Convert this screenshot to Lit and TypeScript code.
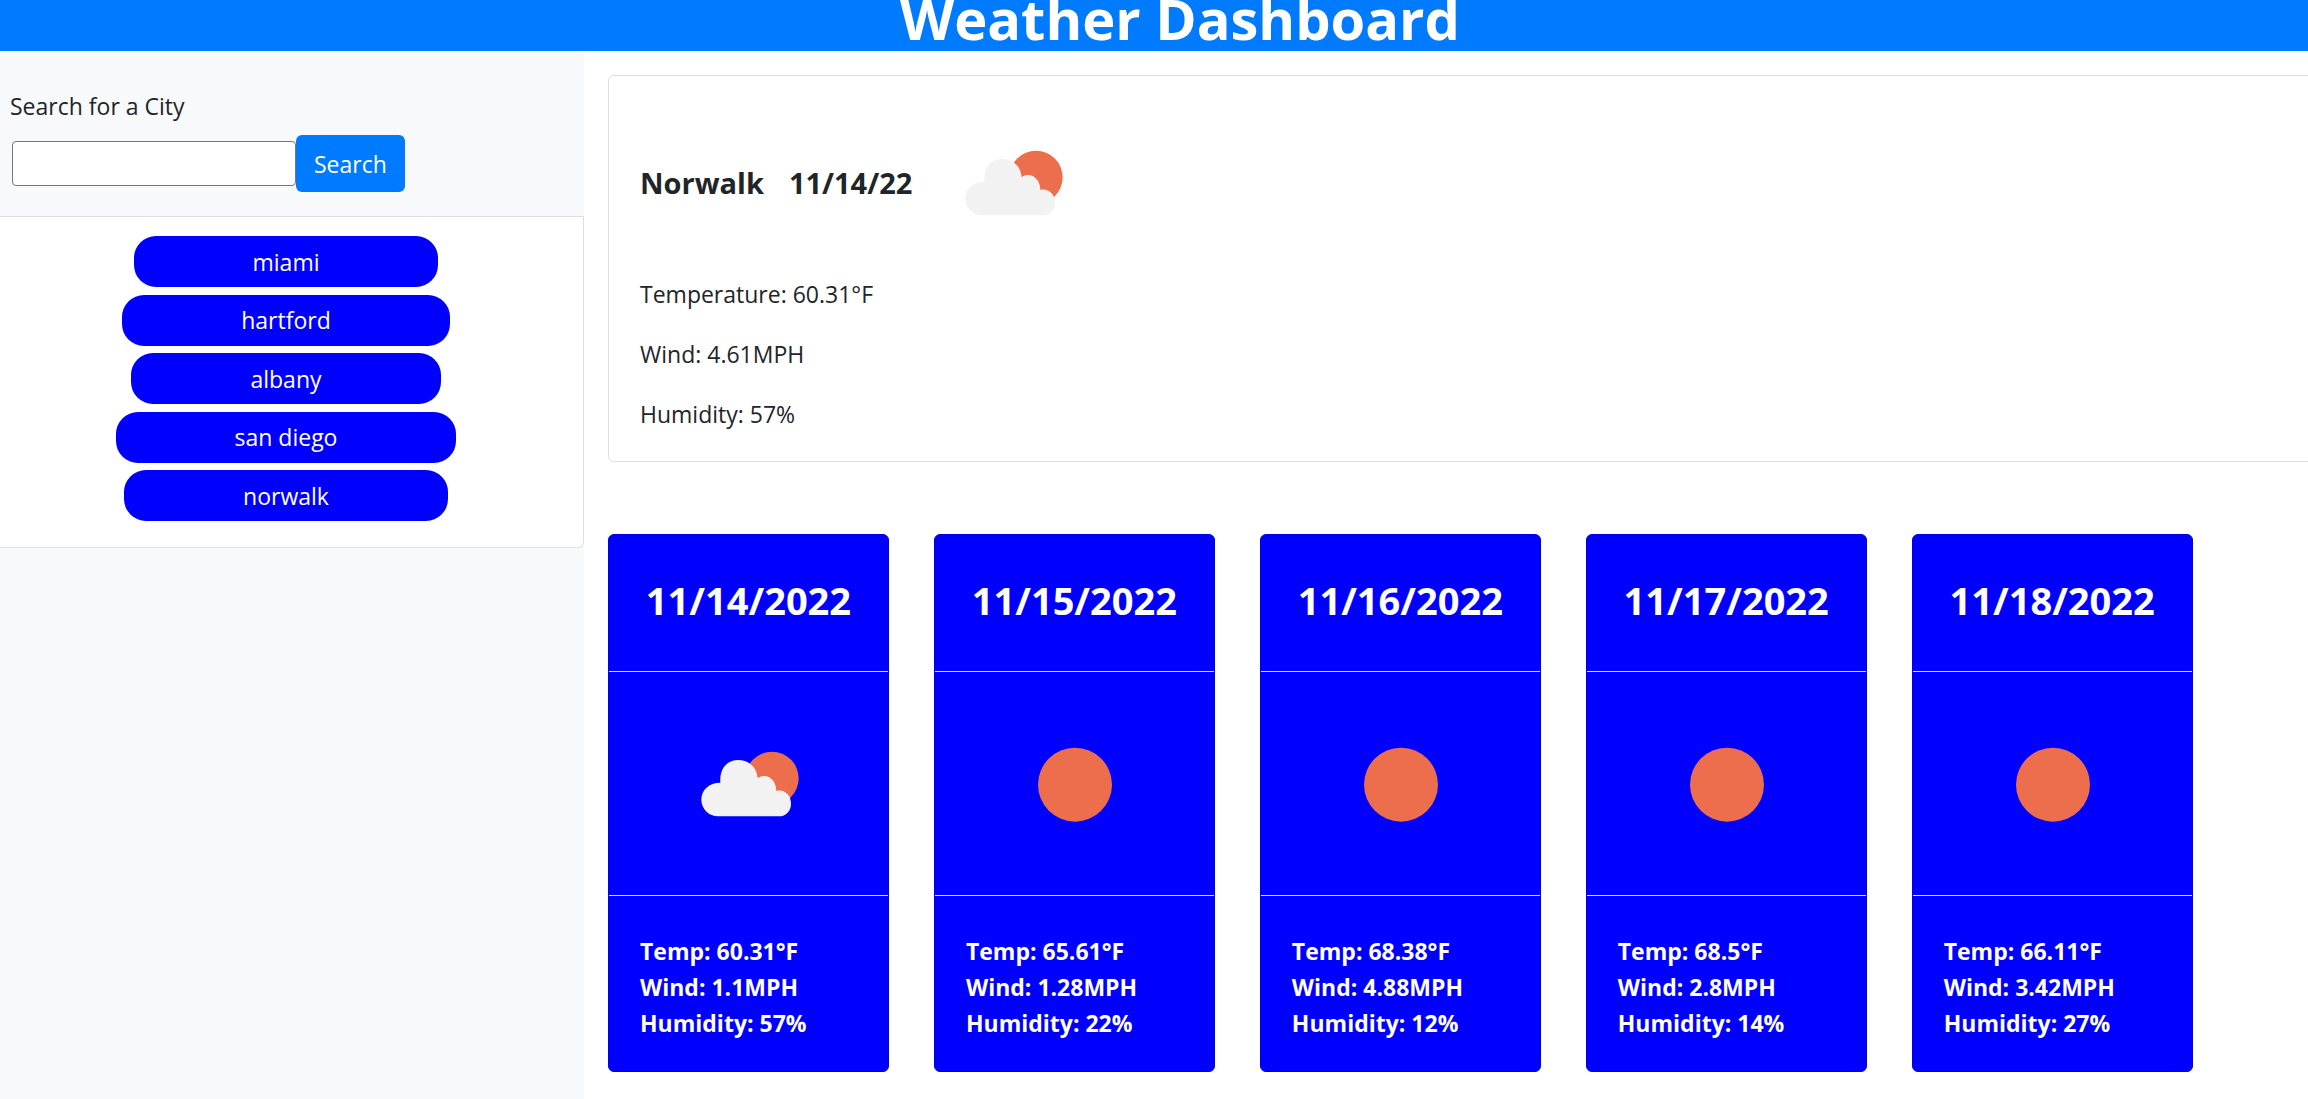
import { LitElement, html, css, svg } from "lit";
import { customElement, property, state } from "lit/decorators.js";

type Sky = "clouds" | "clear";

interface Day {
  date: string;
  sky: Sky;
  temp: string;
  wind: string;
  humidity: string;
}

const CITIES = ["miami", "hartford", "albany", "san diego", "norwalk"];

const FORECAST: Day[] = [
  { date: "11/14/2022", sky: "clouds", temp: "60.31", wind: "1.1", humidity: "57" },
  { date: "11/15/2022", sky: "clear", temp: "65.61", wind: "1.28", humidity: "22" },
  { date: "11/16/2022", sky: "clear", temp: "68.38", wind: "4.88", humidity: "12" },
  { date: "11/17/2022", sky: "clear", temp: "68.5", wind: "2.8", humidity: "14" },
  { date: "11/18/2022", sky: "clear", temp: "66.11", wind: "3.42", humidity: "27" },
];

@customElement("weather-icon")
export class WeatherIcon extends LitElement {
  static styles = css`
    :host {
      display: block;
      flex: none;
      width: 150px;
      height: 150px;
    }
    .icon {
      display: block;
      width: 100%;
      height: 100%;
    }
    .sun {
      fill: #ec6e4c;
    }
    .cloud {
      fill: #f2f2f2;
    }
  `;

  @property() sky: Sky = "clear";

  render() {
    const art =
      this.sky === "clear"
        ? svg`<circle class="sun" cx="219" cy="159" r="111" />`
        : svg`
            <circle class="sun" cx="288" cy="140" r="80" />
            <path class="cloud" d="M126 254 A50 50 0 0 1 76 204 C76 175 99 153 133 153
              C130 112 152 85 187 85 C218 85 242 106 245 139
              C271 122 301 142 301 178 C325 172 345 190 345 216 C345 238 330 254 309 254 Z" />`;
    return html`<svg class="icon" viewBox="-9 -68 450 450" aria-hidden="true">${art}</svg>`;
  }
}

@customElement("forecast-card")
export class ForecastCard extends LitElement {
  static styles = css`
    :host {
      display: block;
      min-width: 0;
    }
    .card {
      background: #0000ff;
      border: 1px solid #0000e0;
      border-radius: 6px;
      color: #fff;
      overflow: hidden;
    }
    .date {
      margin: 0;
      padding: 40px 0 46px;
      border-bottom: 1px solid #dfdfdf;
      font-size: 38px;
      line-height: 50px;
      font-weight: 700;
      text-align: center;
    }
    .sky {
      display: flex;
      justify-content: center;
      padding: 37px 0 36px;
      border-bottom: 1px solid #dfdfdf;
    }
    .stats {
      margin: 0;
      padding: 37px 0 30px 31px;
      list-style: none;
      font-size: 23px;
      line-height: 36px;
      font-weight: 700;
    }
  `;

  @property({ attribute: false }) day!: Day;

  render() {
    const d = this.day;
    return html`
      <article class="card">
        <h3 class="date">${d.date}</h3>
        <div class="sky"><weather-icon .sky=${d.sky}></weather-icon></div>
        <ul class="stats">
          <li>Temp: ${d.temp}°F</li>
          <li>Wind: ${d.wind}MPH</li>
          <li>Humidity: ${d.humidity}%</li>
        </ul>
      </article>
    `;
  }
}

@customElement("app-root")
export class AppRoot extends LitElement {
  static styles = css`
    :host {
      display: flex;
      flex-direction: column;
      min-height: 100vh;
      overflow: hidden;
      background: #fff;
      color: #212529;
      font-family: "Open Sans", "Noto Sans", sans-serif;
      font-size: 23px;
      line-height: 36px;
    }
    .banner {
      display: flex;
      align-items: flex-end;
      justify-content: center;
      height: 51px;
      padding-left: 52px;
      overflow: hidden;
      background: #007bff;
    }
    .title {
      margin: 0;
      color: #fff;
      font-size: 56px;
      line-height: 66px;
      font-weight: 700;
    }
    .layout {
      flex: 1;
      display: flex;
    }
    .sidebar {
      flex: none;
      box-sizing: border-box;
      width: calc(25% + 7px);
      background: #f8f9fa;
    }
    .search {
      display: flex;
      flex-direction: column;
      gap: 11px;
      padding: 37px 10px 24px;
    }
    .field {
      display: flex;
      align-items: center;
      padding-left: 2px;
    }
    .input {
      box-sizing: border-box;
      width: 284px;
      height: 45px;
      padding: 2px 6px;
      border: 1px solid #767676;
      border-radius: 4px;
      background: #fff;
      font: inherit;
    }
    .submit {
      height: 57px;
      padding: 0 18px;
      border: 0;
      border-radius: 6px;
      background: #007bff;
      color: #fff;
      font: inherit;
    }
    .history {
      margin: 0;
      padding: 19px 11px 26px 0;
      border: 1px solid #dfdfdf;
      border-left: 0;
      border-radius: 0 0 6px 0;
      background: #fff;
      list-style: none;
      display: flex;
      flex-direction: column;
      align-items: center;
      justify-content: space-between;
      min-height: 285px;
    }
    .city {
      display: block;
      height: 51px;
      padding: 0 119px;
      border: 0;
      border-radius: 22px;
      background: #0000ff;
      color: #fff;
      font: inherit;
    }
    .main {
      flex: 1;
      min-width: 0;
      padding: 24px 0 24px 24px;
    }
    .today {
      margin-right: -16px;
      padding: 32px 31px 29px;
      border: 1px solid #dfdfdf;
      border-radius: 6px;
    }
    .heading {
      display: flex;
      align-items: center;
      gap: 25px;
    }
    .name {
      margin: 0;
      font-size: 29px;
      line-height: 36px;
      font-weight: 700;
    }
    .readings {
      display: flex;
      flex-direction: column;
      gap: 24px;
      padding-top: 18px;
    }
    .reading {
      margin: 0;
    }
    .forecast {
      display: grid;
      grid-template-columns: repeat(5, minmax(0, 1fr));
      gap: 45px;
      padding: 72px 5vw 0 0;
    }
  `;

  @state() private query = "";

  private onInput(e: Event) {
    this.query = (e.target as HTMLInputElement).value;
  }

  render() {
    return html`
      <header class="banner"><h1 class="title">Weather Dashboard</h1></header>
      <div class="layout">
        <aside class="sidebar">
          <form class="search" @submit=${(e: Event) => e.preventDefault()}>
            <label for="city">Search for a City</label>
            <div class="field">
              <input class="input" id="city" type="text" .value=${this.query} @input=${this.onInput} />
              <button class="submit" type="submit">Search</button>
            </div>
          </form>
          <ul class="history">
            ${CITIES.map((c) => html`<li><button class="city" type="button">${c}</button></li>`)}
          </ul>
        </aside>
        <main class="main">
          <section class="today">
            <div class="heading">
              <h2 class="name">Norwalk</h2>
              <h2 class="name">11/14/22</h2>
              <weather-icon .sky=${"clouds"}></weather-icon>
            </div>
            <div class="readings">
              <p class="reading">Temperature: 60.31°F</p>
              <p class="reading">Wind: 4.61MPH</p>
              <p class="reading">Humidity: 57%</p>
            </div>
          </section>
          <section class="forecast">
            ${FORECAST.map((d) => html`<forecast-card .day=${d}></forecast-card>`)}
          </section>
        </main>
      </div>
    `;
  }
}
